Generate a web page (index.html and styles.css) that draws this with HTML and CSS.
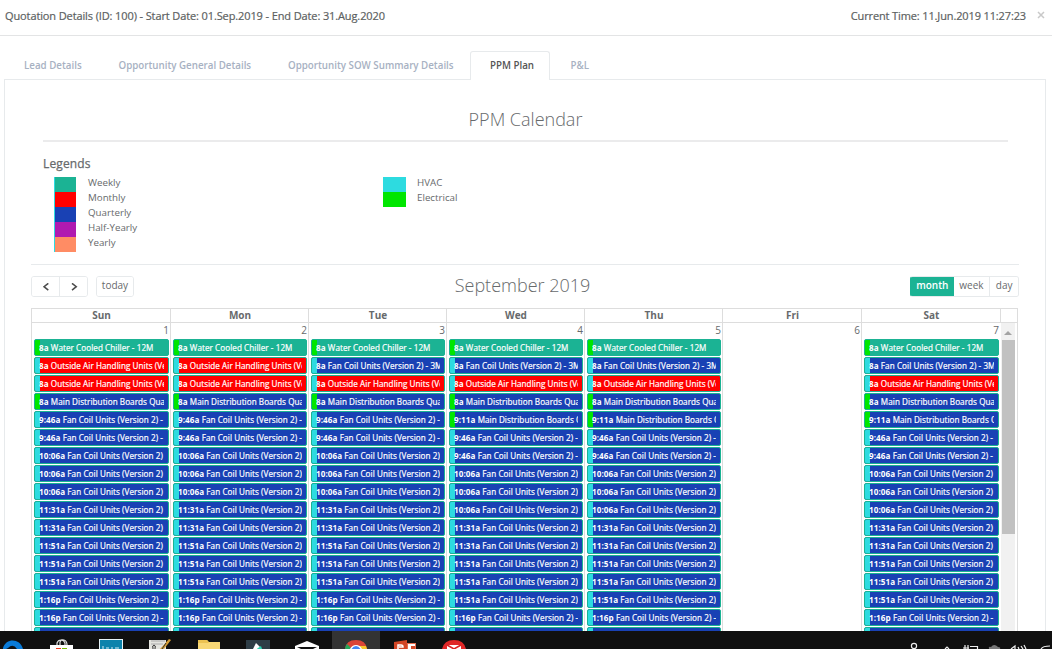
FILE: index.html
```
<!DOCTYPE html>
<html lang="en">
<head>
<meta charset="utf-8">
<title>Quotation Details</title>
<link rel="stylesheet" href="styles.css">
</head>
<body>
<header class="modal-header">
  <span class="title">Quotation Details (ID: 100) - Start Date: 01.Sep.2019 - End Date: 31.Aug.2020</span>
  <span class="clock">Current Time: 11.Jun.2019 11:27:23</span>
  <svg class="close" width="8" height="8" viewBox="0 0 8 8"><path d="M1 1l6 6M7 1L1 7" stroke="#c9c9c9" stroke-width="1.5"/></svg>
</header>
<nav class="tabs">
  <a class="tab t1">Lead Details</a>
  <a class="tab t2">Opportunity General Details</a>
  <a class="tab t3">Opportunity SOW Summary Details</a>
  <a class="tab t4 active">PPM Plan</a>
  <a class="tab t5">P&amp;L</a>
</nav>
<main class="panel">
  <h1 class="heading"><span>PPM Calendar</span></h1>
  <section class="legends">
    <h2>Legends</h2>
    <div class="legend-cols">
      <ul class="legend freq">
        <li><i class="swatch green"></i><span>Weekly</span></li>
        <li><i class="swatch red"></i><span>Monthly</span></li>
        <li><i class="swatch blue"></i><span>Quarterly</span></li>
        <li><i class="swatch purple"></i><span>Half-Yearly</span></li>
        <li><i class="swatch orange"></i><span>Yearly</span></li>
      </ul>
      <ul class="legend kind">
        <li><i class="swatch cyan"></i><span>HVAC</span></li>
        <li><i class="swatch lime"></i><span>Electrical</span></li>
      </ul>
    </div>
  </section>
  <section class="calendar">
    <div class="toolbar">
      <div class="left">
        <div class="group nav">
          <button><svg width="8" height="8" viewBox="0 0 8 8"><path d="M6.300 .3L2 3.700l4.300 3.400" fill="none" stroke="#4c4c4c" stroke-width="1.500"/></svg></button>
          <button><svg width="8" height="8" viewBox="0 0 8 8"><path d="M2 .3L6.300 3.700 2 7.100" fill="none" stroke="#4c4c4c" stroke-width="1.500"/></svg></button>
        </div>
        <div class="group"><button class="today">today</button></div>
      </div>
      <h2 class="month"><span>September 2019</span></h2>
      <div class="group views"><button class="on">month</button><button class="wk">week</button><button class="dy">day</button></div>
    </div>
    <div class="grid">
      <div class="head"><span>Sun</span><span>Mon</span><span>Tue</span><span>Wed</span><span>Thu</span><span>Fri</span><span>Sat</span><span></span></div>
      <div class="days" id="days">
      </div>
    </div>
  </section>
</main>
<footer class="taskbar">
  <svg width="1052" height="18" viewBox="0 0 1052 18">
    <path d="M3 17C6 7 20 7 23 18h-6q-4-6-9-1l-2 1H3z" fill="#0a7bd8"/>
    <path d="M50 14h23v4H50z" fill="#fff"/><path d="M57 14v-2q1-3 4-3t4 3v2M60 14v-3q1-3 4-2t3 5" fill="none" stroke="#ddd" stroke-width="1.200"/><path d="M56 17h5v1h-5z" fill="#e93a1c"/><path d="M62 17h5v1h-5z" fill="#76b900"/>
    <path d="M99 8h24v10H99z" fill="#e8f4f8"/><path d="M100 9h22v9h-22z" fill="#0b83ac"/><path d="M103 15v3M106 17h3M111 17h2M115 17h4" stroke="#d5edf5"/>
    <path d="M149 9h17v9h-17z" fill="#e4e4df"/><path d="M151 10h14M151 13h12" stroke="#aaa"/><path d="M153 18q-1-4 1-4t1 4" fill="none" stroke="#333"/><path d="M169 8l2 1-7 9h-4z" fill="#d69e35"/><path d="M166 12l-4 6" stroke="#333"/>
    <path d="M198 18V9h9l2 2h11v7z" fill="#f8d775"/><path d="M198 9h9l2 3h-11z" fill="#ecc252"/>
    <path d="M246 9h24v9h-24z" fill="#2e3d46"/><path d="M256 12l5 5-4 1h-4z" fill="#fff"/><path d="M258 17l3-2 1 3h-5z" fill="#30d3b5"/>
    <path d="M295 15l12-5 12 5v3h-24z" fill="#fff"/><path d="M297 16h20l-4 2h-12z" fill="#111"/>
    <path d="M332 0h48v18h-48z" fill="#333"/>
    <path d="M345 18q1-9 11-9t11 9z" fill="#db4437"/><path d="M345 18q0-3 2-5l5 5z" fill="#26a65b"/><path d="M359 15h7l1 3h-8z" fill="#f7c52d"/><path d="M350 18q2-4 6-4t6 4z" fill="#fff"/><path d="M351.500 18q2-3 4.500-3t4.500 3z" fill="#4285f4"/>
    <path d="M394 11l13-2v9h-13z" fill="#d24625"/><path d="M407 12h9v6h-9z" fill="#e46c4d"/><path d="M408 13h7v5h-7z" fill="#fff"/><path d="M398 18v-4h3q2 0 2 2h-4" fill="none" stroke="#fff" stroke-width="1.500"/><path d="M411 15h4v3h-4z" fill="#d24625"/>
    <path d="M442 18q2-9 12-9t12 9z" fill="#e02828"/><path d="M447 14h14v4h-14z" fill="#fff"/><path d="M447 14l7 4 7-4" fill="none" stroke="#d22" stroke-width="1.500"/>
    <g fill="none" stroke="#eee" stroke-width="1.200"><circle cx="914" cy="15" r="2.600"/><path d="M945 18l2-2 2 2"/><path d="M963 17h6M965 14v4M968 14v4M970 15.500h8M977.500 15v3"/><path d="M1011 18l4-3v3M1018 16l1 2M1021 15l2 3M1024 14l2 4"/><path d="M1041 18q2-3 9-3"/></g>
    <path d="M989 18q-1-3 2-2 3-4 7 0 3 0 2 2z" fill="#777"/>
  </svg>
</footer>
<script src="calendar.js"></script>
</body>
</html>
```
FILE: styles.css
```
* { box-sizing: border-box; }
body {
  margin: 0; width: 1052px; height: 649px; overflow: hidden;
  display: flex; flex-direction: column;
  background: #fff; color: #676a6c; font-family: "Open Sans", sans-serif; font-size: 10px;
}
h1, h2, ul { margin: 0; padding: 0; font-weight: 400; list-style: none; }
button { font: inherit; color: inherit; background: #fff; border: 0; padding: 0; }
.modal-header {
  flex: none; height: 36px; padding: 0 7px 4px 5px; border-bottom: 1px solid #e3e4e5;
  display: flex; align-items: center; font-size: 11px; letter-spacing: -.115px; color: #5c5f61;
  -webkit-text-stroke: .2px; white-space: nowrap;
}
.clock { margin-left: auto; margin-right: 11px; letter-spacing: -.13px; }
.close { margin-bottom: 2px; }
.tabs { flex: none; height: 43px; padding-left: 5px; display: flex; align-items: flex-end; }
.tab {
  height: 28px; line-height: 30px; padding-left: 20px; font-size: 9.75px; font-weight: 600;
  color: #a7b1c2; white-space: nowrap;
}
.t1 { width: 94px; padding-left: 19px; } .t2 { width: 169px; padding-left: 19.500px; } .t3 { width: 202px; } .t4 { width: 80px; }
.t5 { padding-left: 20.500px; }
.t4.active {
  height: 29px; line-height: 28px; margin-bottom: -1px; padding-left: 19px; background: #fff; color: #555; position: relative;
  border: 1px solid #e7eaec; border-bottom: 0; border-radius: 3px 3px 0 0;
}
.panel {
  flex: 1; min-height: 0; overflow: hidden; margin: 0 6px 0 4px; padding: 0 26px;
  border: 1px solid #e7eaec; border-bottom: 0;
}
.heading {
  height: 62px; margin: 0 11px 0 12px; padding-top: 27px; border-bottom: 2px solid #ebebec;
  font-size: 18px; line-height: 25px; font-weight: 300; text-align: center;
}
.legends { height: 123px; padding: 15px 0 0 12px; border-bottom: 1px solid #e7eaec; }
.legends h2 { font-size: 12px; line-height: 14px; letter-spacing: .15px; -webkit-text-stroke: .25px; padding-bottom: 6px; }
.legend-cols { display: flex; padding-left: 11px; }
.freq { width: 329px; }
.legend li { height: 15px; display: flex; line-height: 14px; font-size: 9.750px; }
.legend span { margin-top: -1px; }
.swatch { width: 22px; margin-right: 12px; }
.freq .swatch { border-left: 1px solid #2ddbe0; }
.kind .swatch { width: 23px; margin-right: 11px; }
.green { background: #1bb394; } .red { background: #f00; } .blue { background: #1941b4; }
.purple { background: #b01ab0; } .orange { background: #ff8c64; } .cyan { background: #2ddbe0; } .lime { background: #00e600; }
.toolbar { height: 43px; padding-top: 11px; display: grid; grid-template-columns: 109px 1fr 109px; }
.left { display: flex; gap: 8px; }
.group { display: flex; height: 21px; border: 1px solid #e7eaec; border-radius: 3px; overflow: hidden; line-height: 17px; }
.group button { display: flex; justify-content: center; }
.nav button { width: 27px; align-items: center; }
.nav { width: 57px; }
.nav button + button { width: 28px; border-left: 1px solid #e7eaec; }
.today { width: 36px; }
.month { font-size: 18px; line-height: 18px; font-weight: 300; text-align: center; padding-right: 5px; }
.views button.on { width: 43px; background: #1bb394; color: #fff; font-weight: 600; }
.group.views { border-left-color: #1bb394; background: linear-gradient(90deg, #1bb394 43px, #fff 43px); }
.wk { width: 36px; } .views .dy { width: 29px; border-left: 1px solid #e7eaec; }
.grid { width: 987px; height: 340px; border: 1px solid #ddd; }
.head, .days { display: grid; grid-template-columns: 139px 138px 138px 138px 138px 139px 139px 1fr; }
.head { height: 14px; border-bottom: 1px solid #ddd; font-weight: 700; line-height: 13px; text-align: center; }
.head span, .day { border-right: 1px solid #ddd; }
.head span { padding-left: 1px; }
.head span:last-child { border: 0; }
.day { height: 326px; padding: 0 1px 0 2px; overflow: hidden; }
.day:nth-child(7) { border-right: 0; padding-right: 2px; }
.num { height: 16px; line-height: 15px; text-align: right; }
.event {
  height: 17px; margin-bottom: 1px; border: 1px solid #1bb394; border-radius: 2px;
  display: flex; overflow: hidden; color: #fff;
}
.stripe { flex: none; width: 5px; }
.label {
  flex: 1; min-width: 0; margin: 0 4px 0 -1px; overflow: hidden; white-space: nowrap;
  font-size: 8.100px; line-height: 16px; letter-spacing: .075px; -webkit-text-stroke: .2px;
}
.label b { font-weight: 700; -webkit-text-stroke: 0; }
.scroll { background: #f1f1f1; width: 14px; display: flex; flex-direction: column; align-items: center; }
.arrow { margin: 7px 0 5px; }
.thumb { width: 13px; height: 194px; background: #c1c1c1; }
.taskbar { flex: none; height: 18px; background: #101010; }
.taskbar svg { display: block; }
```
FILE: calendar.js
```
const W = ['8a', 'Water Cooled Chiller - 12M', 'lime', 'green'];
const F = ['8a', 'Fan Coil Units (Version 2) - 3M', 'cyan', 'blue'];
const O = ['8a', 'Outside Air Handling Units (Ve', 'cyan', 'red'];
const M = ['8a', 'Main Distribution Boards Qua', 'lime', 'blue'];
const N = ['9:11a', 'Main Distribution Boards Q', 'lime', 'blue'];
const fan = (time, tail) => [time, 'Fan Coil Units (Version 2)' + (tail || ''), 'cyan', 'blue'];
const rest = [
  fan('9:46a', ' -'), fan('9:46a', ' -'), fan('10:06a'), fan('10:06a'), fan('10:06a'),
  fan('11:31a'), fan('11:31a'), fan('11:51a'), fan('11:51a'), fan('11:51a'),
  fan('1:16p', ' -'), fan('1:16p', ' -'), fan('1:16p', ' -')
];
const early = [W, O, O, M, ...rest];
const late = [W, F, O, M, N, ...rest];
const week = [early, early, [W, F, O, M, ...rest], late, late, [], late];
document.getElementById('days').innerHTML = week.map((events, i) =>
  `<div class="day"><div class="num">${i + 1}</div>` + events.slice(0, 17).map(([time, name, kind, color]) =>
    `<div class="event ${color}"><i class="stripe ${kind}"></i><span class="label"><b>${time}</b> ${name}</span></div>`).join('') + '</div>'
).join('') + '<div class="scroll"><svg class="arrow" width="8" height="5" viewBox="0 0 8 5"><path d="M0 5l4-4 4 4z" fill="#a3a3a3"/></svg><div class="thumb"></div></div>';
```
